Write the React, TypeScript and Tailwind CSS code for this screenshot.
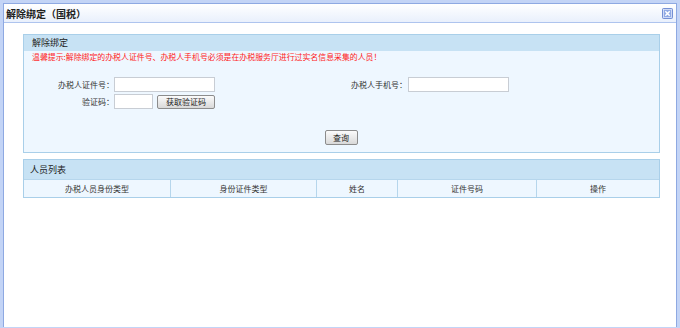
const cjk = { fontFamily: '"Noto Sans CJK SC", "Noto Sans", sans-serif' };

const columns = [
  { label: "办税人员身份类型", w: "w-[147px]" },
  { label: "身份证件类型", w: "w-[146px]" },
  { label: "姓名", w: "w-[81px]" },
  { label: "证件号码", w: "w-[139px]" },
  { label: "操作", w: "flex-1" },
];

function Btn({ children, className = "" }: { children: React.ReactNode; className?: string }) {
  return (
    <button
      className={
        "flex items-center justify-center rounded-[2px] border border-[#8c8c8c] bg-gradient-to-b from-[#fbfbfb] to-[#d9d9d9] text-[8px] leading-none text-[#222] " +
        className
      }
    >
      {children}
    </button>
  );
}

function Input({ className = "" }: { className?: string }) {
  return <input className={"h-[15px] border border-[#c8cdd4] bg-white " + className} />;
}

export default function App() {
  return (
    <div
      style={cjk}
      className="h-[328px] w-[680px] border-x-[3px] border-t-[3px] border-b-[1px] border-[#c3d4f6] bg-white"
    >
      <div className="flex h-full flex-col border border-b-0 border-[#8ea9e2]">
        {/* title bar */}
        <div className="flex h-[19px] items-center justify-between border-b border-[#aec4ee] bg-gradient-to-b from-white to-[#e9f0fc] pl-[2px] pr-[3px]">
          <span className="text-[10px] font-bold text-[#222]">解除绑定（国税）</span>
          <svg width="11" height="11" viewBox="0 0 11 11">
            <rect x="0.5" y="0.5" width="10" height="10" rx="1" fill="#8fa9e4" stroke="#7590d4" />
            <rect x="1.5" y="1.5" width="8" height="8" fill="none" stroke="#dfe7fa" strokeWidth="0.8" />
            <path d="M3.3 3.3 L7.7 7.7 M7.7 3.3 L3.3 7.7" stroke="#fff" strokeWidth="1.5" />
          </svg>
        </div>

        {/* query panel */}
        <div className="ml-[19px] mt-[11px] w-[637px] border border-[#a9cfe9] bg-[#eef7ff]">
          <div className="flex h-[16px] items-center bg-[#c7e2f4] pl-[8px] text-[9px] text-[#222]">
            解除绑定
          </div>
          <div className="pl-[8px] pt-[1px] text-[7.9px] leading-[10px] text-[#ff1a1a]">
            温馨提示:解除绑定的办税人证件号、办税人手机号必须是在办税服务厅进行过实名信息采集的人员！
          </div>
          <div className="mt-[15px] flex items-center text-[8px] text-[#333]">
            <div className="flex w-[300px] items-center">
              <span className="w-[90px] text-right">办税人证件号：</span>
              <Input className="w-[101px]" />
            </div>
            <span className="w-[83px] text-right">办税人手机号：</span>
            <Input className="ml-[1px] w-[101px]" />
          </div>
          <div className="mt-[2px] flex items-center text-[8px] text-[#333]">
            <span className="w-[90px] text-right">验证码：</span>
            <Input className="w-[39px]" />
            <Btn className="ml-[4px] h-[14px] w-[58px]">获取验证码</Btn>
          </div>
          <div className="mb-[7px] mt-[21px] flex justify-center pr-[1px]">
            <Btn className="h-[15px] w-[33px]">查询</Btn>
          </div>
        </div>

        {/* list panel */}
        <div className="ml-[19px] mt-[6px] w-[637px] border border-[#a9cfe9] bg-[#eef7ff]">
          <div className="flex h-[20px] items-center border-b border-[#b6d6ec] bg-[#c7e2f4] pl-[6px] text-[9px] text-[#222]">
            人员列表
          </div>
          <div className="flex h-[17px] text-[8px] text-[#333]">
            {columns.map((c, i) => (
              <div
                key={c.label}
                className={
                  c.w +
                  " flex items-center justify-center" +
                  (i < columns.length - 1 ? " border-r border-[#b6d6ec]" : "")
                }
              >
                {c.label}
              </div>
            ))}
          </div>
        </div>
      </div>
    </div>
  );
}
